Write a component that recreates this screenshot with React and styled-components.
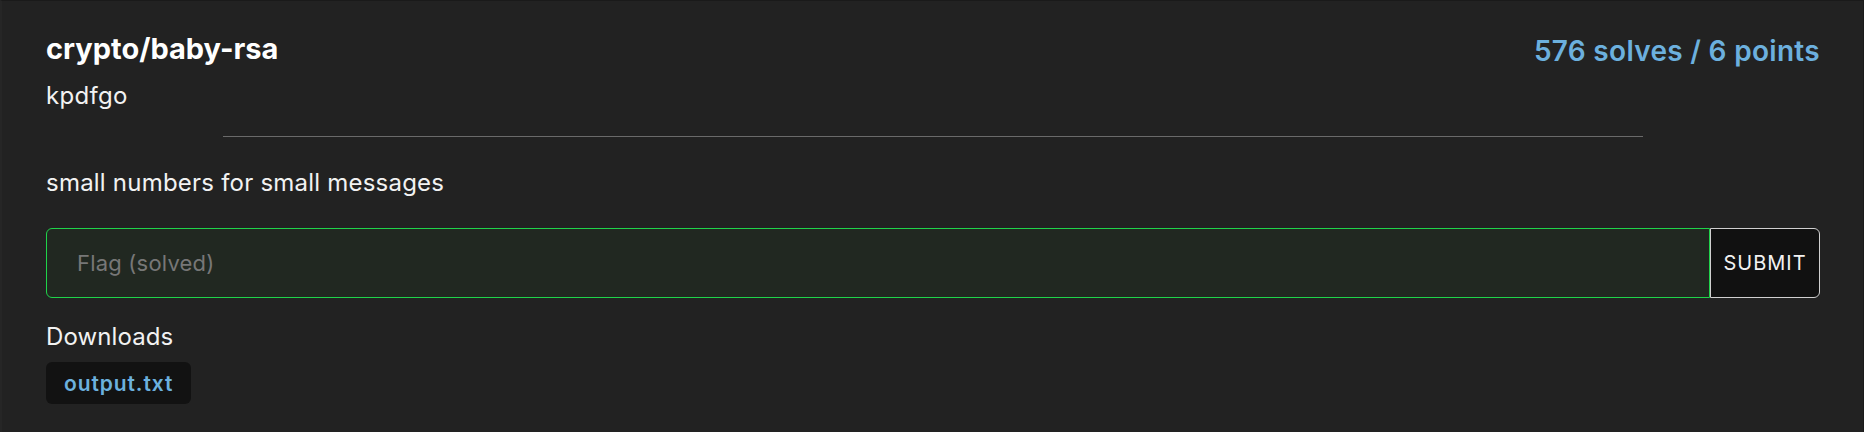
import React from "react";
import styled, { createGlobalStyle } from "styled-components";

const Global = createGlobalStyle`
  html, body { margin: 0; padding: 0; background: #222222; }
  body { font-family: Inter, "Noto Sans", sans-serif; color: #f2f2f2; }
  * { box-sizing: border-box; }
`;

const Card = styled.div`
  width: 1864px;
  height: 432px;
  background: #222222;
  border-top: 1px solid #1a1a1a;
  border-right: 1px solid #1a1a1a;
  border-left: 2px solid #262626;
  padding: 30px 43px 0 44px;
  display: flex;
  flex-direction: column;
`;

const Header = styled.div`
  display: flex;
  justify-content: space-between;
  align-items: flex-start;
`;

const TitleBlock = styled.div`
  display: flex;
  flex-direction: column;
  gap: 14px;
`;

const Title = styled.h1`
  margin: 0;
  font-size: 29px;
  line-height: 36px;
  font-weight: 700;
  color: #ffffff;
`;

const Author = styled.div`
  font-size: 24px;
  line-height: 30px;
  letter-spacing: 0.3px;
  color: #f2f2f2;
`;

const Stats = styled.div`
  font-size: 28px;
  line-height: 36px;
  font-weight: 600;
  letter-spacing: 0.3px;
  color: #6cb0de;
  margin-top: 2px;
`;

const Divider = styled.hr`
  width: 80%;
  margin: 25px auto 0;
  border: none;
  border-top: 1px solid #6a6a6a;
  height: 0;
`;

const Description = styled.p`
  margin: 31px 0 0;
  font-size: 24px;
  line-height: 30px;
  letter-spacing: 0.22px;
  color: #f2f2f2;
`;

const FlagForm = styled.form`
  display: flex;
  margin-top: 30px;
  height: 70px;
`;

const FlagInput = styled.input`
  flex: 1;
  height: 100%;
  background: #212821;
  border: 1px solid #1fd34a;
  border-radius: 6px 0 0 6px;
  padding: 0 30px;
  font-family: Inter, "Noto Sans", sans-serif;
  font-size: 22px;
  color: #f2f2f2;
  letter-spacing: 0.2px;
  outline: none;
  &::placeholder { color: #777777; }
`;

const SubmitButton = styled.button`
  width: 110px;
  height: 100%;
  background: #111111;
  border: 1px solid #d0d0d0;
  border-radius: 0 6px 6px 0;
  color: #f2f2f2;
  font-family: Inter, "Noto Sans", sans-serif;
  font-size: 20px;
  letter-spacing: 1px;
  padding: 0;
`;

const SectionLabel = styled.div`
  margin-top: 24px;
  font-size: 24px;
  line-height: 30px;
  letter-spacing: 0.1px;
  color: #f2f2f2;
`;

const FileList = styled.div`
  display: flex;
  gap: 10px;
  margin-top: 10px;
`;

const FileChip = styled.a`
  display: inline-flex;
  align-items: center;
  height: 42px;
  padding: 0 18px;
  background: #121212;
  border-radius: 6px;
  color: #6cb0de;
  font-size: 21px;
  font-weight: 600;
  letter-spacing: 0.9px;
  text-decoration: none;
`;

export default function App() {
  return (
    <>
      <Global />
      <Card>
        <Header>
          <TitleBlock>
            <Title>crypto/baby-rsa</Title>
            <Author>kpdfgo</Author>
          </TitleBlock>
          <Stats>576 solves / 6 points</Stats>
        </Header>
        <Divider />
        <Description>small numbers for small messages</Description>
        <FlagForm onSubmit={(e) => e.preventDefault()}>
          <FlagInput placeholder="Flag (solved)" />
          <SubmitButton type="submit">SUBMIT</SubmitButton>
        </FlagForm>
        <SectionLabel>Downloads</SectionLabel>
        <FileList>
          <FileChip href="#">output.txt</FileChip>
        </FileList>
      </Card>
    </>
  );
}
